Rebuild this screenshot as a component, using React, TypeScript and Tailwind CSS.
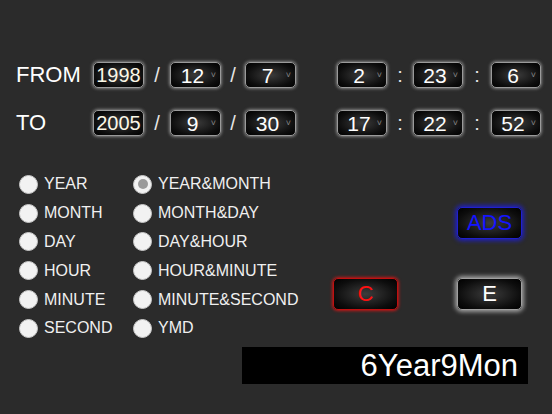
import React from 'react';

const boxBase =
  'flex items-center rounded-[5px] bg-[radial-gradient(ellipse_at_center,#3c3c3c_0%,#0d0d0d_70%,#000_100%)]';

const SelectBox = ({ value, w = 'w-[51px]' }: { value: string; w?: string }) => (
  <div
    className={`${boxBase} ${w} h-[26px] relative border border-[#9a9a9a] shadow-[0_0_3px_1px_rgba(200,200,200,0.55)]`}
  >
    <span className="flex-1 text-center pr-[6px] text-[21px] leading-none text-white">{value}</span>
    <span className="absolute right-[4px] top-[8px] text-[9px] leading-none text-[#888]">˅</span>
  </div>
);

const InputBox = ({ value }: { value: string }) => (
  <div
    className={`${boxBase} w-[51px] h-[26px] justify-center border border-[#9a9a9a] shadow-[0_0_3px_1px_rgba(200,200,200,0.55)]`}
  >
    <span className="text-[20px] leading-none text-[#fbf7e6]">{value}</span>
  </div>
);

const Sep = ({ ch, w }: { ch: string; w: string }) => (
  <div className={`${w} text-center text-[20px] leading-none text-[#e6e6e6]`}>{ch}</div>
);

const DateRow = ({
  label,
  y,
  m,
  d,
  h,
  mi,
  s,
}: {
  label: string;
  y: string;
  m: string;
  d: string;
  h: string;
  mi: string;
  s: string;
}) => (
  <div className="flex items-center h-[26px] pl-[16px]">
    <div className="w-[77px] text-[22px] leading-none text-white">{label}</div>
    <InputBox value={y} />
    <Sep ch="/" w="w-[26px]" />
    <SelectBox value={m} />
    <Sep ch="/" w="w-[24px]" />
    <SelectBox value={d} />
    <div className="w-[41px]" />
    <SelectBox value={h} w="w-[50px]" />
    <Sep ch=":" w="w-[26px]" />
    <SelectBox value={mi} w="w-[50px]" />
    <Sep ch=":" w="w-[28px]" />
    <SelectBox value={s} w="w-[50px]" />
  </div>
);

const Radio = ({ label, checked }: { label: string; checked?: boolean }) => (
  <div className="flex items-center h-[28.8px]">
    <div className="w-[19px] h-[19px] rounded-full bg-[#f2f2f2] border border-[#c8c8c8] flex items-center justify-center">
      {checked && <div className="w-[10px] h-[10px] rounded-full bg-[#9a9a9a]" />}
    </div>
    <span className="ml-[6px] text-[16px] leading-none text-[#f0f0f0]">{label}</span>
  </div>
);

const Btn = ({ label, tone }: { label: string; tone: 'blue' | 'red' | 'gray' }) => {
  const styles = {
    blue: 'border-[#2020d0] shadow-[0_0_4px_2px_rgba(30,30,220,0.8)] text-[#1414ff]',
    red: 'border-[#c01010] shadow-[0_0_3px_1px_rgba(230,20,20,0.8)] text-[#ff1010]',
    gray: 'border-[#a0a0a0] shadow-[0_0_4px_2px_rgba(210,210,210,0.7)] text-white',
  }[tone];
  return (
    <div className={`${boxBase} w-[65px] h-[32px] justify-center border ${styles}`}>
      <span className="text-[22px] leading-none">{label}</span>
    </div>
  );
};

const col1 = ['YEAR', 'MONTH', 'DAY', 'HOUR', 'MINUTE', 'SECOND'];
const col2 = ['YEAR&MONTH', 'MONTH&DAY', 'DAY&HOUR', 'HOUR&MINUTE', 'MINUTE&SECOND', 'YMD'];

export default function App() {
  return (
    <div className="w-[552px] h-[414px] bg-[#2b2b2b] overflow-hidden font-['Liberation_Sans',Arial,sans-serif]">
      <div className="pt-[62px] flex flex-col gap-[22px]">
        <DateRow label="FROM" y="1998" m="12" d="7" h="2" mi="23" s="6" />
        <DateRow label="TO" y="2005" m="9" d="30" h="17" mi="22" s="52" />
      </div>

      <div className="flex mt-[34px]">
        <div className="w-[333px] flex pl-[19px]">
          <div className="w-[114px]">
            {col1.map((l) => (
              <Radio key={l} label={l} />
            ))}
          </div>
          <div>
            {col2.map((l, i) => (
              <Radio key={l} label={l} checked={i === 0} />
            ))}
          </div>
        </div>
        <div className="flex flex-col">
          <div className="mt-[37px] ml-[124px]">
            <Btn label="ADS" tone="blue" />
          </div>
          <div className="mt-[39px] flex gap-[59px]">
            <Btn label="C" tone="red" />
            <Btn label="E" tone="gray" />
          </div>
        </div>
      </div>

      <div className="ml-[242px] mt-[4px] w-[286px] h-[37px] bg-black flex items-center justify-end pr-[10px]">
        <span className="text-[31px] leading-none text-white">6Year9Mon</span>
      </div>
    </div>
  );
}
